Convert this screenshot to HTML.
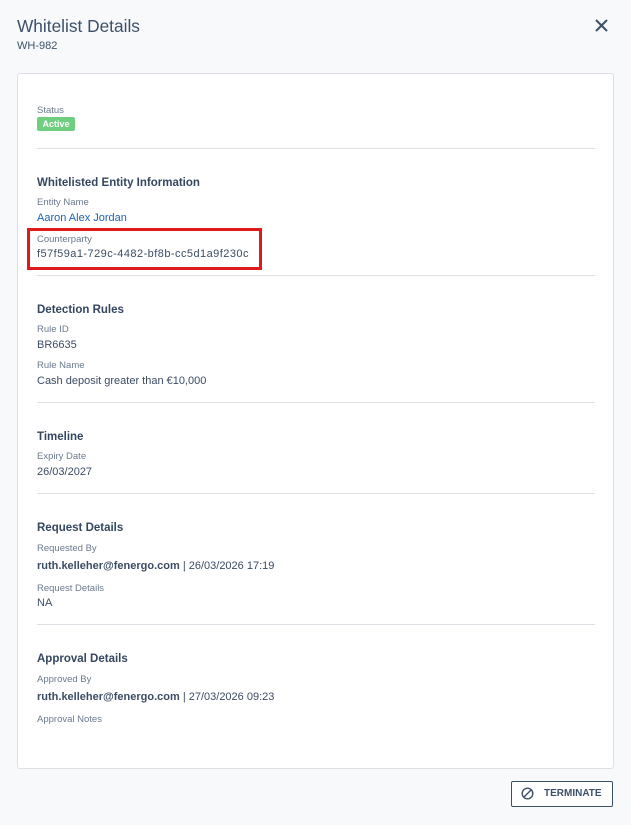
<!DOCTYPE html>
<html><head><meta charset="utf-8"><style>
body{margin:0;width:631px;height:825px;background:#f7f9fb;font-family:"Liberation Sans",sans-serif;position:relative;overflow:hidden;color:#3b4c63}
.a{position:absolute;white-space:nowrap;line-height:16px}
.l{font-size:9.5px;color:#6b7a8d}
.v{font-size:11px;color:#3b4c63}
.h{font-size:11.5px;font-weight:bold;color:#34475f}
.d{position:absolute;left:37px;width:558px;height:1px;background:#dcdfe3}
</style></head><body>
<div class="a" style="left:17px;top:15px;font-size:17.3px;line-height:22px;color:#3d5069">Whitelist Details</div>
<div class="a" style="left:17px;top:38px;font-size:11px;color:#3d5069">WH-982</div>
<svg style="position:absolute;left:595px;top:19px" width="13" height="13" viewBox="0 0 13 13"><path d="M1 1L12 12M12 1L1 12" stroke="#3d5069" stroke-width="2"/></svg>
<div style="position:absolute;left:17px;top:73px;width:595px;height:694px;background:#fff;border:1px solid #dcdfe3;border-radius:3px"></div>
<div class="a l" style="left:37px;top:103px">Status</div>
<div class="a" style="left:37px;top:117px;width:38px;height:14px;background:#6fcf7f;border-radius:2px;color:#fff;font-size:9px;font-weight:bold;line-height:14px;text-align:center">Active</div>
<div class="d" style="top:148px"></div>
<div class="a h" style="left:37px;top:175px">Whitelisted Entity Information</div>
<div class="a l" style="left:37px;top:195px">Entity Name</div>
<div class="a v" style="left:37px;top:210px;color:#1d62b5">Aaron Alex Jordan</div>
<div style="position:absolute;left:27px;top:228px;width:229px;height:36px;border:3px solid #e0191b"></div>
<div class="a l" style="left:37px;top:232px">Counterparty</div>
<div class="a v" style="left:37px;top:246px;letter-spacing:0.45px">f57f59a1-729c-4482-bf8b-cc5d1a9f230c</div>
<div class="d" style="top:275px"></div>
<div class="a h" style="left:37px;top:302px">Detection Rules</div>
<div class="a l" style="left:37px;top:322px">Rule ID</div>
<div class="a v" style="left:37px;top:337px">BR6635</div>
<div class="a l" style="left:37px;top:358px">Rule Name</div>
<div class="a v" style="left:37px;top:373px">Cash deposit greater than €10,000</div>
<div class="d" style="top:402px"></div>
<div class="a h" style="left:37px;top:429px">Timeline</div>
<div class="a l" style="left:37px;top:449px">Expiry Date</div>
<div class="a v" style="left:37px;top:464px">26/03/2027</div>
<div class="d" style="top:493px"></div>
<div class="a h" style="left:37px;top:520px">Request Details</div>
<div class="a l" style="left:37px;top:541px">Requested By</div>
<div class="a v" style="left:37px;top:558px"><b>ruth.kelleher@fenergo.com</b> | 26/03/2026 17:19</div>
<div class="a l" style="left:37px;top:581px">Request Details</div>
<div class="a v" style="left:37px;top:595px">NA</div>
<div class="d" style="top:624px"></div>
<div class="a h" style="left:37px;top:651px">Approval Details</div>
<div class="a l" style="left:37px;top:672px">Approved By</div>
<div class="a v" style="left:37px;top:689px"><b>ruth.kelleher@fenergo.com</b> | 27/03/2026 09:23</div>
<div class="a l" style="left:37px;top:712px">Approval Notes</div>
<div style="position:absolute;left:511px;top:781px;width:100px;height:24px;border:1px solid #3d5069;border-radius:2px;background:#fff"></div>
<svg style="position:absolute;left:521px;top:787px" width="13" height="13" viewBox="0 0 13 13"><circle cx="6.5" cy="6.5" r="5.3" fill="none" stroke="#3d5069" stroke-width="1.4"/><path d="M3 10L10 3" stroke="#3d5069" stroke-width="1.4"/></svg>
<div class="a" style="left:544px;top:786px;font-size:10px;font-weight:bold;color:#3d5069">TERMINATE</div>
</body></html>
